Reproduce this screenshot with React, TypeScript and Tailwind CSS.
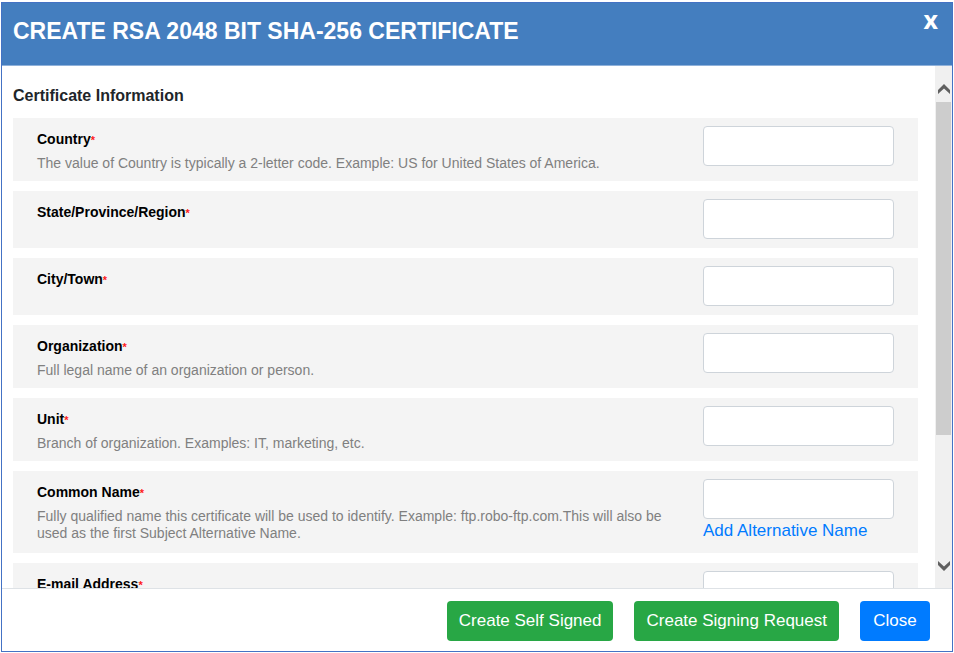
import type { ReactNode } from "react";

type Field = {
  id: string;
  label: string;
  hint?: string;
  extra?: ReactNode;
};

const fields: Field[] = [
  {
    id: "country",
    label: "Country",
    hint: "The value of Country is typically a 2-letter code. Example: US for United States of America.",
  },
  { id: "state", label: "State/Province/Region" },
  { id: "city", label: "City/Town" },
  {
    id: "organization",
    label: "Organization",
    hint: "Full legal name of an organization or person.",
  },
  {
    id: "unit",
    label: "Unit",
    hint: "Branch of organization. Examples: IT, marketing, etc.",
  },
  {
    id: "common-name",
    label: "Common Name",
    hint: "Fully qualified name this certificate will be used to identify. Example: ftp.robo-ftp.com.This will also be used as the first Subject Alternative Name.",
    extra: (
      <a href="#alternative-name" className="mb-0.5 block text-[17px] leading-6 text-[#007bff]">
        Add Alternative Name
      </a>
    ),
  },
  { id: "email", label: "E-mail Address" },
];

function FieldRow({ id, label, hint, extra }: Field) {
  return (
    <div className="flex min-h-[57px] items-start justify-between bg-[#f4f4f4] px-6 py-2">
      <div className="w-[628px] pt-1 pb-px">
        <label htmlFor={id} className="block text-sm leading-[18px] font-bold text-black">
          {label}
          <span className="text-[11px] leading-none text-[#ff1a1a]">*</span>
        </label>
        {hint && <p className="mt-[7px] text-sm leading-[17px] text-[#808080]">{hint}</p>}
      </div>
      <div className="w-[191px] shrink-0">
        <input
          id={id}
          type="text"
          required
          className="block h-10 w-full rounded border border-[#ced4da] bg-white px-3 text-base shadow-none outline-none"
        />
        {extra}
      </div>
    </div>
  );
}

function Chevron({ down = false }: { down?: boolean }) {
  return (
    <svg viewBox="0 0 12 10" className="h-[10px] w-3" fill="#606060" aria-hidden="true">
      {down ? <path d="M0 0v4L6 10l6-6V0L6 5.4z" /> : <path d="M0 10V6L6 0l6 6v4L6 4.6z" />}
    </svg>
  );
}

function Scrollbar() {
  return (
    <div className="flex w-[17px] shrink-0 flex-col bg-[#f0f0f0]">
      <button type="button" aria-label="Scroll up" className="flex h-9 items-end justify-center pb-2">
        <Chevron />
      </button>
      <div className="flex-1 px-px">
        <div className="h-[74%] bg-[#cdcdcd]" />
      </div>
      <button type="button" aria-label="Scroll down" className="flex h-9 items-center justify-center pb-2">
        <Chevron down />
      </button>
    </div>
  );
}

export default function App() {
  return (
    <div className="h-screen bg-white px-px pt-0.5 pb-px font-['Liberation_Sans',Arial,sans-serif]">
      <div role="dialog" aria-labelledby="title" className="flex h-full flex-col border border-[#4472c4] bg-white">
        <header className="flex h-[63px] shrink-0 items-start justify-between border-b border-[#8fb1da] bg-[#447ebf] pr-3 pl-[11px] text-white">
          <h1 id="title" className="pt-3 text-[23px] leading-8 font-bold">
            CREATE RSA 2048 BIT SHA-256 CERTIFICATE
          </h1>
          <button
            type="button"
            aria-label="Close dialog"
            className="px-0.5 font-['Open_Sans',sans-serif] text-[25px] leading-8 font-bold"
          >
            x
          </button>
        </header>

        <div className="flex min-h-0 flex-1">
          <main className="min-w-0 flex-1 overflow-y-auto pr-[17px] pl-[11px] [scrollbar-width:none]">
            <h2 className="pt-[18px] pb-[10px] text-base leading-6 font-bold text-[#212529]">
              Certificate Information
            </h2>
            <form className="flex flex-col gap-[10px] pb-4">
              {fields.map((field) => (
                <FieldRow key={field.id} {...field} />
              ))}
            </form>
          </main>
          <Scrollbar />
        </div>

        <footer className="flex shrink-0 justify-end gap-[21px] border-t border-[#dee2e6] pt-3 pr-[22px] pb-[10px] text-[17px] leading-6 text-white">
          <button type="button" className="h-10 rounded bg-[#28a745] px-3">
            Create Self Signed
          </button>
          <button type="button" className="h-10 rounded bg-[#28a745] px-3">
            Create Signing Request
          </button>
          <button type="button" className="h-10 min-w-[70px] rounded bg-[#007bff] px-3">
            Close
          </button>
        </footer>
      </div>
    </div>
  );
}
